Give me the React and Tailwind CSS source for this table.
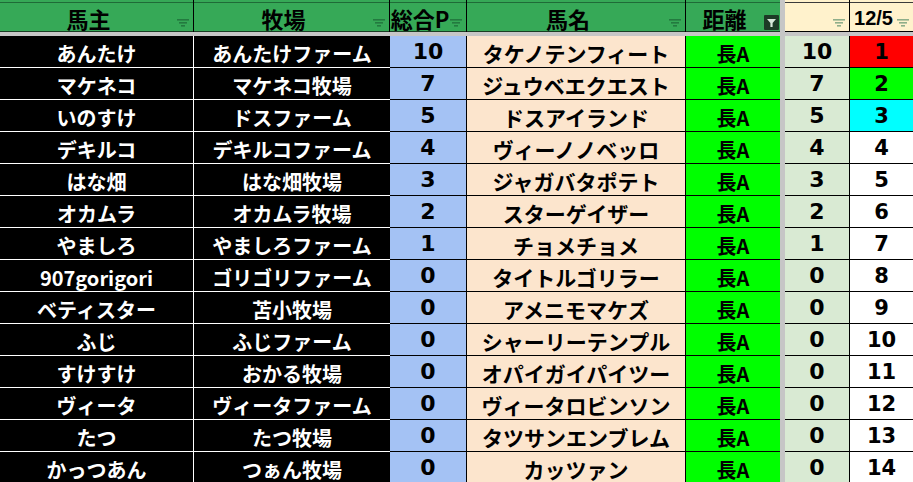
import React from "react";

const rows = [
  ["あんたけ", "あんたけファーム", 10, "タケノテンフィート"],
  ["マケネコ", "マケネコ牧場", 7, "ジュウベエクエスト"],
  ["いのすけ", "ドスファーム", 5, "ドスアイランド"],
  ["デキルコ", "デキルコファーム", 4, "ヴィーノノベッロ"],
  ["はな畑", "はな畑牧場", 3, "ジャガバタポテト"],
  ["オカムラ", "オカムラ牧場", 2, "スターゲイザー"],
  ["やましろ", "やましろファーム", 1, "チョメチョメ"],
  ["907gorigori", "ゴリゴリファーム", 0, "タイトルゴリラー"],
  ["ベティスター", "苫小牧場", 0, "アメニモマケズ"],
  ["ふじ", "ふじファーム", 0, "シャーリーテンプル"],
  ["すけすけ", "おかる牧場", 0, "オパイガイパイツー"],
  ["ヴィータ", "ヴィータファーム", 0, "ヴィータロビンソン"],
  ["たつ", "たつ牧場", 0, "タツサンエンブレム"],
  ["かっつあん", "つぁん牧場", 0, "カッツァン"],
];

const rankBg = ["bg-[#ff0000]", "bg-[#00ff00]", "bg-[#00ffff]"];

const jp = "font-['Noto_Sans_CJK_JP',sans-serif] font-bold";
const num = "font-['DejaVu_Sans','Noto_Sans_CJK_JP',sans-serif] font-bold";

function Funnel({ color }) {
  return (
    <svg width="12" height="8" viewBox="0 0 12 8">
      <rect x="0" y="0" width="12" height="1.6" fill={color} />
      <rect x="2" y="3" width="8" height="1.6" fill={color} />
      <rect x="4" y="6" width="4" height="1.6" fill={color} />
    </svg>
  );
}

function ActiveFilter() {
  return (
    <svg width="15" height="15" viewBox="0 0 15 15">
      <rect x="0" y="0" width="15" height="15" rx="1" fill="#1d3a26" />
      <polygon points="3,4 12,4 8.6,8 8.6,12 6.4,12 6.4,8" fill="#d7e7d9" />
    </svg>
  );
}

function HeadCell({ width, label, cream, active, borderR, labelFont }) {
  return (
    <div
      className={`${width} h-[32px] flex flex-col ${
        cream ? "bg-[#fff2cc]" : "bg-[#36a957]"
      } ${borderR ? "border-r border-black" : ""}`}
    >
      <div className="h-[2px]" />
      <div
        className={`flex-1 flex items-center border-t border-b ${
          cream ? "border-t-[#3a3a3a] border-b-black" : "border-t-[#1f6b37] border-b-[#1a3d24]"
        }`}
      >
        <span
          className={`flex-1 min-w-0 whitespace-nowrap text-center leading-none text-black ${labelFont || jp + " text-[22px]"} pt-[1px]`}
        >
          {label}
        </span>
        <div
          className={`shrink-0 flex justify-end ${
            active ? "w-[17px] pr-[1px] self-end mb-[1px]" : "w-[16px] pr-[4px] self-end mb-[4px]"
          }`}
        >
          {active ? <ActiveFilter /> : <Funnel color={cream ? "#8fae8a" : "#237a3f"} />}
        </div>
      </div>
    </div>
  );
}

function Row({ r, i }) {
  const [owner, farm, pts, horse] = r;
  return (
    <div className="flex h-[32px]">
      <div className={`w-[194px] bg-black border-r border-b border-white flex items-center justify-center pt-[5px] text-white text-[20px] leading-none whitespace-nowrap ${jp}`}>
        {owner}
      </div>
      <div className={`w-[196px] bg-black border-b border-white flex items-center justify-center pt-[5px] text-white text-[20px] leading-none whitespace-nowrap ${jp}`}>
        {farm}
      </div>
      <div className={`w-[77px] bg-[#a4c2f4] border-r border-b border-black flex items-center justify-center pt-[1px] text-black text-[22px] leading-none ${num}`}>
        {pts}
      </div>
      <div className={`w-[219px] bg-[#fce5cd] border-r border-b border-black flex items-center justify-center pt-[4px] text-black text-[21px] leading-none whitespace-nowrap ${jp}`}>
        {horse}
      </div>
      <div className={`w-[94px] bg-[#00ff00] border-b border-black flex items-center justify-center pt-[5px] text-black text-[20px] leading-none ${jp}`}>
        長A
      </div>
      <div className="w-[5px] bg-[#c6c6c6]" />
      <div className={`w-[65px] bg-[#d9ead3] border-r border-b border-black flex items-center justify-center pt-[1px] text-black text-[22px] leading-none ${num}`}>
        {pts}
      </div>
      <div className={`w-[63px] ${rankBg[i] || "bg-white"} border-b border-black flex items-center justify-center pt-[1px] text-black text-[21px] leading-none ${num}`}>
        {i + 1}
      </div>
    </div>
  );
}

export default function App() {
  return (
    <div className="w-[913px] h-[482px] overflow-hidden bg-white">
      <div className="flex">
        <HeadCell width="w-[194px]" label="馬主" borderR />
        <HeadCell width="w-[196px]" label="牧場" borderR />
        <HeadCell width="w-[77px]" label="総合P" borderR />
        <HeadCell width="w-[219px]" label="馬名" borderR />
        <HeadCell width="w-[94px]" label="距離" active />
        <div className="w-[5px] h-[32px] bg-[#c6c6c6]" />
        <HeadCell width="w-[65px]" label="" cream borderR />
        <HeadCell
          width="w-[63px]"
          label="12/5"
          cream
          labelFont="font-['Liberation_Sans',sans-serif] font-bold text-[20px]"
        />
      </div>
      <div className="h-[4px] bg-[#c6c6c6]" />
      {rows.map((r, i) => (
        <Row key={i} r={r} i={i} />
      ))}
    </div>
  );
}
